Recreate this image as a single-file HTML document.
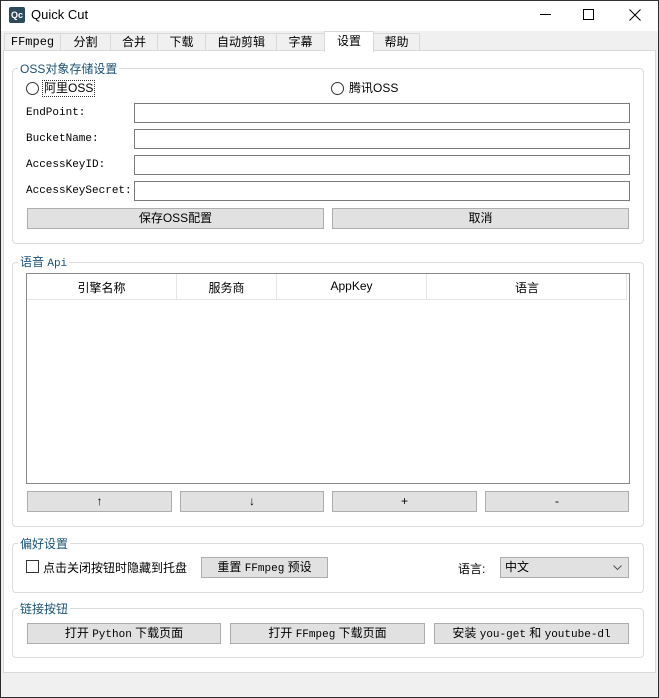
<!DOCTYPE html><html><head><meta charset="utf-8"><style>
*{box-sizing:border-box;margin:0;padding:0}
body{width:659px;height:698px;background:#f0f0f0;font-family:"Liberation Sans","Noto Sans CJK SC",sans-serif;font-size:12px;color:#000;position:relative;overflow:hidden}
.a{position:absolute}
.mono{font-family:"Liberation Mono","Noto Sans CJK SC",monospace;font-size:11px}
.grp{position:absolute;border:1px solid #dcdcdc;border-radius:4px}
.gt{position:absolute;background:#fff;color:#1a5276;padding:0 2px;font-size:12px;line-height:14px}
.inp{position:absolute;left:134px;width:496px;height:20px;border:1px solid #7a7a7a;background:#fff}
.btn{position:absolute;height:21px;border:1px solid #adadad;background:#e1e1e1;text-align:center;line-height:19px}
.tab{position:absolute;top:33px;height:18px;border:1px solid #d9d9d9;border-bottom:none;background:#f0f0f0;text-align:center;line-height:17px;font-size:12px}
.lbl{position:absolute;left:26px}
</style></head><body>
<div class="a" style="left:0;top:0;width:659px;height:698px;border:1px solid #2b2b2b;border-top:1px solid #333"></div>
<div class="a" style="left:1px;top:1px;width:657px;height:30px;background:#fff"></div>
<div class="a" style="left:9px;top:7px;width:16px;height:16px;background:#2b4a5c;color:#fff;font-size:9px;font-weight:bold;text-align:center;line-height:16px;border-radius:2px">Qc</div>
<div class="a" style="left:31px;top:7px;font-size:13px">Quick Cut</div>
<div class="a" style="left:540px;top:14px;width:11px;height:1px;background:#000"></div>
<div class="a" style="left:583px;top:9px;width:11px;height:11px;border:1px solid #000"></div>
<svg class="a" style="left:629px;top:9px" width="12" height="12"><path d="M0.5 0.5L11.5 11.5M11.5 0.5L0.5 11.5" stroke="#000" stroke-width="1"/></svg>
<div class="tab mono" style="left:4px;width:57px">FFmpeg</div>
<div class="tab" style="left:60px;width:51px">分割</div>
<div class="tab" style="left:110px;width:48px">合并</div>
<div class="tab" style="left:157px;width:49px">下载</div>
<div class="tab" style="left:205px;width:72px">自动剪辑</div>
<div class="tab" style="left:276px;width:49px">字幕</div>
<div class="tab" style="left:373px;width:47px">帮助</div>
<div class="a" style="left:3px;top:50px;width:653px;height:623px;background:#fff;border:1px solid #d9d9d9"></div>
<div class="tab" style="left:324px;top:31px;width:50px;height:21px;background:#fff;z-index:2;line-height:19px">设置</div>

<div class="grp" style="left:12px;top:68px;width:632px;height:176px"></div>
<div class="gt" style="left:18px;top:62px">OSS对象存储设置</div>
<div class="a" style="left:26px;top:82px;width:13px;height:13px;border:1px solid #333;border-radius:50%"></div>
<div class="a" style="left:42px;top:80px;border:1px dotted #333;padding:0 1px;line-height:15px">阿里OSS</div>
<div class="a" style="left:331px;top:82px;width:13px;height:13px;border:1px solid #333;border-radius:50%"></div>
<div class="a" style="left:349px;top:81px;line-height:15px">腾讯OSS</div>
<div class="lbl mono" style="top:107px">EndPoint:</div>
<div class="lbl mono" style="top:133px">BucketName:</div>
<div class="lbl mono" style="top:159px">AccessKeyID:</div>
<div class="lbl mono" style="top:185px">AccessKeySecret:</div>
<div class="inp" style="top:103px"></div>
<div class="inp" style="top:129px"></div>
<div class="inp" style="top:155px"></div>
<div class="inp" style="top:181px"></div>
<div class="btn" style="left:27px;top:208px;width:297px">保存OSS配置</div>
<div class="btn" style="left:332px;top:208px;width:297px">取消</div>

<div class="grp" style="left:12px;top:262px;width:632px;height:265px"></div>
<div class="gt" style="left:18px;top:255px">语音 <span class="mono">Api</span></div>
<div class="a" style="left:26px;top:273px;width:604px;height:211px;border:1px solid #8a8a8a;background:#fff"></div>
<div class="a" style="left:27px;top:274px;width:600px;height:26px;border-bottom:1px solid #e5e5e5"></div>
<div class="a" style="left:27px;top:279px;width:149px;text-align:center">引擎名称</div>
<div class="a" style="left:176px;top:274px;width:1px;height:26px;background:#e5e5e5"></div>
<div class="a" style="left:177px;top:279px;width:99px;text-align:center">服务商</div>
<div class="a" style="left:276px;top:274px;width:1px;height:26px;background:#e5e5e5"></div>
<div class="a" style="left:277px;top:279px;width:149px;text-align:center">AppKey</div>
<div class="a" style="left:426px;top:274px;width:1px;height:26px;background:#e5e5e5"></div>
<div class="a" style="left:427px;top:279px;width:200px;text-align:center">语言</div>
<div class="a" style="left:626px;top:274px;width:1px;height:26px;background:#e5e5e5"></div>
<div class="btn" style="left:27px;top:491px;width:145px">↑</div>
<div class="btn" style="left:180px;top:491px;width:144px">↓</div>
<div class="btn" style="left:332px;top:491px;width:145px">+</div>
<div class="btn" style="left:485px;top:491px;width:144px">-</div>

<div class="grp" style="left:12px;top:543px;width:632px;height:50px"></div>
<div class="gt" style="left:18px;top:537px">偏好设置</div>
<div class="a" style="left:26px;top:560px;width:13px;height:13px;border:1px solid #333"></div>
<div class="a" style="left:43px;top:559px">点击关闭按钮时隐藏到托盘</div>
<div class="btn" style="left:201px;top:557px;width:127px">重置 <span class="mono">FFmpeg</span> 预设</div>
<div class="a" style="left:458px;top:560px">语言:</div>
<div class="a" style="left:500px;top:557px;width:129px;height:21px;border:1px solid #adadad;background:#e1e1e1;padding-left:4px;line-height:19px">中文<svg style="position:absolute;right:6px;top:7px" width="9" height="6"><path d="M0.5 0.5L4.5 4.5L8.5 0.5" stroke="#555" fill="none"/></svg></div>

<div class="grp" style="left:12px;top:608px;width:632px;height:50px"></div>
<div class="gt" style="left:18px;top:602px">链接按钮</div>
<div class="btn" style="left:27px;top:623px;width:194px">打开 <span class="mono">Python</span> 下载页面</div>
<div class="btn" style="left:230px;top:623px;width:195px">打开 <span class="mono">FFmpeg</span> 下载页面</div>
<div class="btn" style="left:434px;top:623px;width:195px">安装 <span class="mono">you-get</span> 和 <span class="mono">youtube-dl</span></div>
</body></html>
